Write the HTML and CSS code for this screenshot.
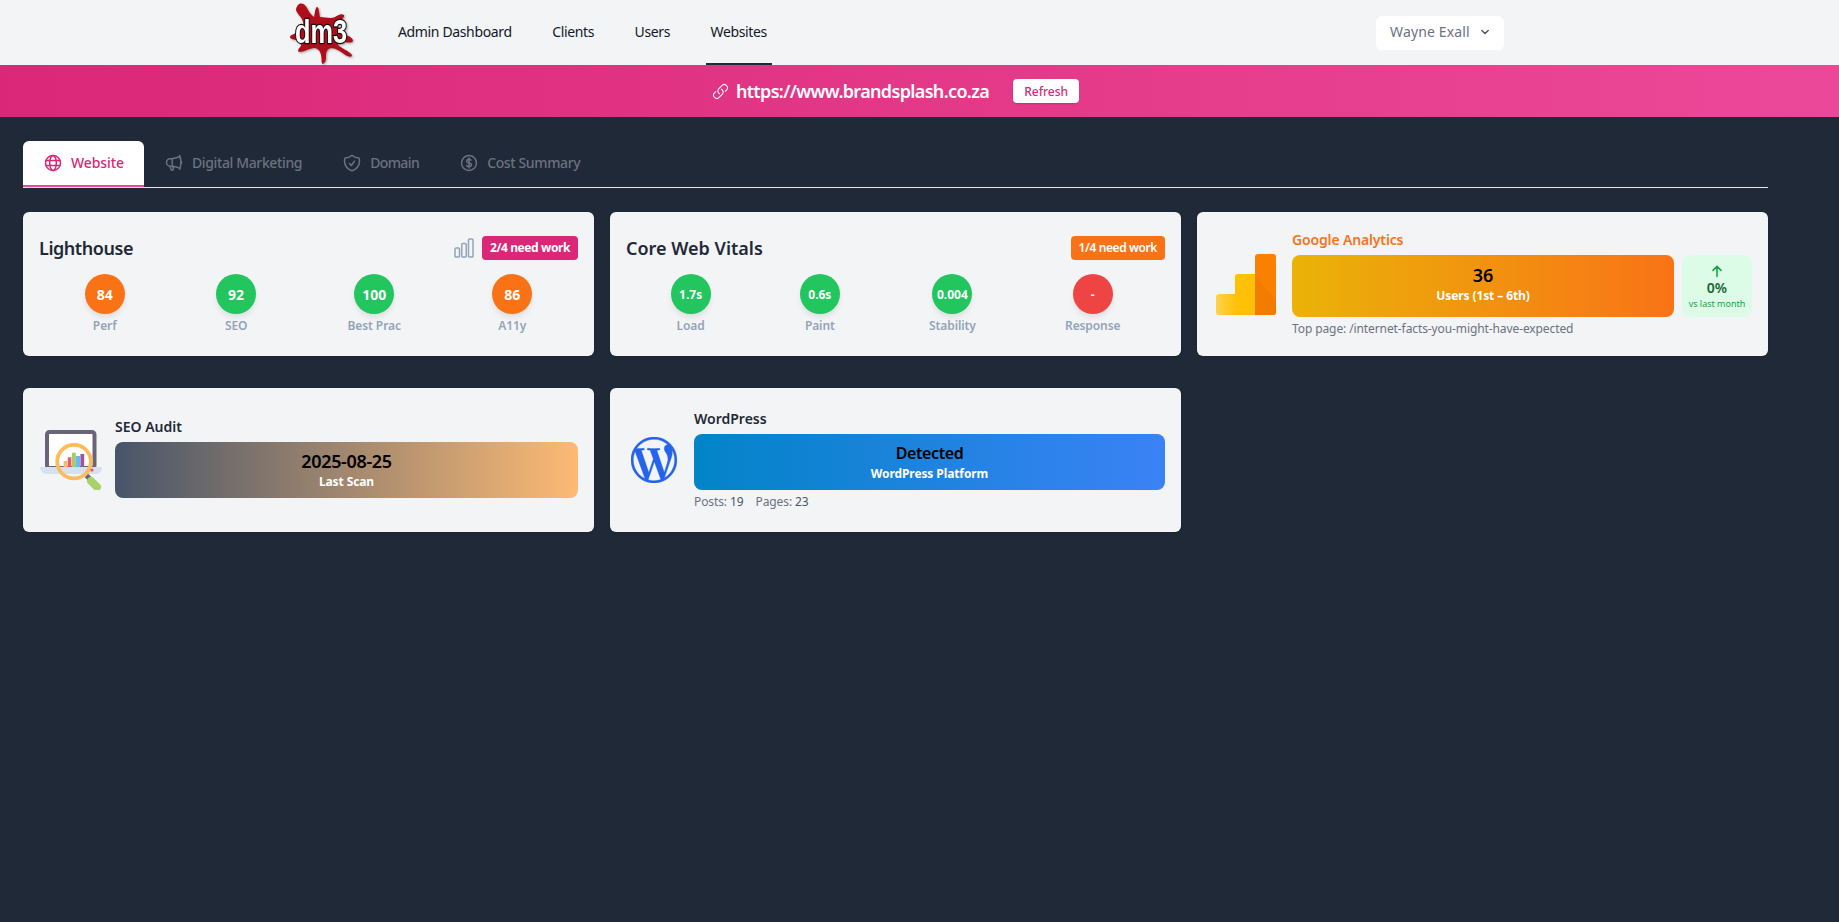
FILE: index.html
```html
<!DOCTYPE html>
<html>
  <head>
    <meta charset="utf-8">
    <title>Websites</title>
    <link rel="stylesheet" href="styles.css">
  </head>
  <body>
    <nav class="topnav">
      <svg class="logo" viewBox="0 0 64 62" width="64" height="62">
        <path class="splat" d="M9 3C12 0 16 2 18 6C20 10 22 13 25 15C26 11 26 6 28 5C30 5 30 11 31 15C36 15 42 17 46 15C49 13 52 11 55 13C56 15 52 18 49 20C47 23 50 27 53 30C56 33 62 34 64 38C64 41 60 41 56 40C52 39 49 40 49 43C52 46 60 49 63 53C63 56 59 55 55 52C51 49 46 46 42 46C38 47 37 50 37 54C37 57 37 60 34 62C32 62 33 57 32 53C31 48 28 46 25 46C21 46 15 50 10 50C8 49 10 46 12 44C13 41 10 39 7 38C4 37 1 37 1 35C2 32 6 32 9 30C13 28 15 24 14 20C13 15 8 12 7 8C7 6 8 4 9 3Z"/>
        <text class="logo-text" x="32" y="41" textLength="52" lengthAdjust="spacingAndGlyphs">dm3</text>
      </svg>
      <a class="navlink" href="#">Admin Dashboard</a>
      <a class="navlink" href="#">Clients</a>
      <a class="navlink" href="#">Users</a>
      <a class="navlink active" href="#">Websites</a>
      <div class="usermenu">
        <span>Wayne Exall</span>
        <svg class="ico-chev" viewBox="0 0 20 20" width="16" height="16"><path d="M6 8l4 4 4-4" fill="none" stroke="currentColor" stroke-width="1.8" stroke-linecap="round" stroke-linejoin="round"/></svg>
      </div>
    </nav>

    <div class="banner">
      <svg class="ico" viewBox="0 0 24 24" width="17" height="17"><path d="M13.19 8.688a4.5 4.5 0 011.242 7.244l-4.5 4.5a4.5 4.5 0 01-6.364-6.364l1.757-1.757m13.35-.622l1.757-1.757a4.5 4.5 0 00-6.364-6.364l-4.5 4.5a4.5 4.5 0 001.242 7.244"/></svg>
      <span class="url">https://www.brandsplash.co.za</span>
      <button class="refresh">Refresh</button>
    </div>

    <main class="content">
      <div class="tabs">
        <div class="tab active">
          <svg class="ico" viewBox="0 0 24 24" width="20" height="20"><circle cx="12" cy="12" r="9"/><ellipse cx="12" cy="12" rx="4" ry="9"/><path d="M3.6 9h16.8M3.6 15h16.8"/></svg>
          Website
        </div>
        <div class="tab">
          <svg class="ico" viewBox="0 0 24 24" width="20" height="20"><path d="M10.34 15.84c-.688-.06-1.386-.09-2.09-.09H7.5a4.5 4.5 0 110-9h.75c.704 0 1.402-.03 2.09-.09m0 9.18c.253.962.584 1.892.985 2.783.247.55.06 1.21-.463 1.511l-.657.38c-.551.318-1.26.117-1.527-.461a20.845 20.845 0 01-1.44-4.282m3.102.069a18.03 18.03 0 01-.59-4.59c0-1.586.205-3.124.59-4.59m0 9.18a23.848 23.848 0 018.835 2.535M10.34 6.66a23.847 23.847 0 008.835-2.535m0 0A23.74 23.74 0 0018.795 3m.38 1.125a23.91 23.91 0 011.014 5.395m-1.014 8.855c-.118.38-.245.754-.38 1.125m.38-1.125a23.91 23.91 0 001.014-5.395m0-3.46c.495.413.811 1.035.811 1.73 0 .695-.316 1.317-.811 1.73m0-3.46a24.347 24.347 0 010 3.46"/></svg>
          Digital Marketing
        </div>
        <div class="tab tab-domain">
          <svg class="ico" viewBox="0 0 24 24" width="20" height="20"><path d="M9 12.75L11.25 15 15 9.75m-3-7.036A11.959 11.959 0 013.598 6 11.99 11.99 0 003 9.749c0 5.592 3.824 10.29 9 11.623 5.176-1.332 9-6.03 9-11.622 0-1.31-.21-2.571-.598-3.751h-.152c-3.196 0-6.1-1.248-8.25-3.286z"/></svg>
          Domain
        </div>
        <div class="tab">
          <svg class="ico" viewBox="0 0 24 24" width="20" height="20"><path d="M12 6v12m-3-2.818l.879.659c1.171.879 3.07.879 4.242 0 1.172-.879 1.172-2.303 0-3.182C13.536 12.219 12.768 12 12 12c-.725 0-1.45-.22-2.003-.659-1.106-.879-1.106-2.303 0-3.182s2.9-.879 4.006 0l.415.33M21 12a9 9 0 11-18 0 9 9 0 0118 0z"/></svg>
          Cost Summary
        </div>
      </div>

      <div class="cards">
        <section class="card score-card">
          <header class="card-head">
            <h2 class="tight">Lighthouse</h2>
            <svg class="ico ico-bars" viewBox="0 0 24 24" width="24" height="24"><path d="M3 13.125C3 12.504 3.504 12 4.125 12h2.25c.621 0 1.125.504 1.125 1.125v6.75C7.5 20.496 6.996 21 6.375 21h-2.25A1.125 1.125 0 013 19.875v-6.75zM9.750 8.625c0-.621.504-1.125 1.125-1.125h2.25c.621 0 1.125.504 1.125 1.125v11.25c0 .621-.504 1.125-1.125 1.125h-2.25a1.125 1.125 0 01-1.125-1.125V8.625zM16.5 4.125c0-.621.504-1.125 1.125-1.125h2.25C20.496 3 21 3.504 21 4.125v15.750c0 .621-.504 1.125-1.125 1.125h-2.25a1.125 1.125 0 01-1.125-1.125V4.125z"/></svg>
            <span class="badge pink">2/4 need work</span>
          </header>
          <div class="scores">
            <div class="score"><div class="dot orange">84</div><span>Perf</span></div>
            <div class="score"><div class="dot green">92</div><span>SEO</span></div>
            <div class="score"><div class="dot green">100</div><span>Best Prac</span></div>
            <div class="score"><div class="dot orange">86</div><span>A11y</span></div>
          </div>
        </section>

        <section class="card score-card">
          <header class="card-head">
            <h2>Core Web Vitals</h2>
            <span class="badge amber">1/4 need work</span>
          </header>
          <div class="scores">
            <div class="score"><div class="dot green small">1.7s</div><span>Load</span></div>
            <div class="score"><div class="dot green small">0.6s</div><span>Paint</span></div>
            <div class="score"><div class="dot green small">0.004</div><span>Stability</span></div>
            <div class="score"><div class="dot red small">-</div><span>Response</span></div>
          </div>
        </section>

        <section class="card media-card ga-card">
          <svg class="ga-logo" viewBox="0 0 60 61" width="60" height="61">
            <defs>
              <linearGradient id="gaLeft" x1="0" y1="0" x2="1" y2="0"><stop offset="0" stop-color="#ffd34d"/><stop offset="1" stop-color="#ffc107"/></linearGradient>
            </defs>
            <path d="M3 40h17v21H3a3 3 0 01-3-3V43a3 3 0 013-3z" fill="url(#gaLeft)"/>
            <path d="M22 20h17v41H19V23a3 3 0 013-3z" fill="#ffc107"/>
            <path d="M42 0h15a3 3 0 013 3v55a3 3 0 01-3 3H39V3a3 3 0 013-3z" fill="#f98000"/>
            <path d="M39 22l21 24v12a3 3 0 01-3 3H39z" fill="#ef7a00" opacity=".8"/>
          </svg>
          <div class="media-body pad-s">
            <h3 class="ga-title">Google Analytics</h3>
            <div class="ga-row">
              <div class="stat grad-amber"><strong>36</strong><span>Users (1st – 6th)</span></div>
              <div class="delta">
                <svg viewBox="0 0 24 24" width="16" height="16"><path d="M12 20V5M6 11l6-6 6 6" fill="none" stroke="#16a34a" stroke-width="2.4" stroke-linecap="round" stroke-linejoin="round"/></svg>
                <b>0%</b>
                <small>vs last month</small>
              </div>
            </div>
            <p class="note">Top page: /internet-facts-you-might-have-expected</p>
          </div>
        </section>

        <section class="card media-card seo-card">
          <svg class="seo-logo" viewBox="0 0 62 60" width="62" height="60">
            <rect x="7" y="2" width="47.500" height="36" rx="2.500" fill="#fff" stroke="#6a6479" stroke-width="4"/>
            <path d="M0 37h62c0 3-2 7-5 7H6c-3 0-6-4-6-7z" fill="#d6e1ef"/>
            <rect x="23.600" y="31" width="3.800" height="6" fill="#fdbb5c"/>
            <rect x="27.800" y="27.300" width="3.600" height="9.700" fill="#e85a6a"/>
            <rect x="32" y="22.700" width="3.800" height="14.300" fill="#a3cf62"/>
            <rect x="35.800" y="26" width="4.200" height="11" fill="#6cb9f0"/>
            <rect x="40.400" y="24" width="3.800" height="13" fill="#a0559a"/>
            <circle cx="34" cy="31.600" r="16.800" fill="none" stroke="#fdbb5c" stroke-width="3.800"/>
            <path d="M46.500 45.500l4 4" stroke="#6a6479" stroke-width="5"/>
            <path d="M51 51l6 6" stroke="#a9d26c" stroke-width="8" stroke-linecap="round"/>
            <circle cx="52" cy="40" r="1.600" fill="#ef5350"/>
          </svg>
          <div class="media-body pad-b">
            <h3>SEO Audit</h3>
            <div class="stat grad-slate tall"><strong class="date">2025-08-25</strong><span>Last Scan</span></div>
          </div>
        </section>

        <section class="card media-card wp-card">
          <svg class="wp-logo" viewBox="0 0 24 24" width="46" height="46"><path d="M21.469 6.825c.84 1.537 1.318 3.3 1.318 5.175 0 3.979-2.156 7.456-5.363 9.325l3.295-9.527c.615-1.54.82-2.771.82-3.864 0-.405-.026-.78-.07-1.11m-7.981.105c.647-.03 1.232-.105 1.232-.105.582-.075.514-.93-.067-.899 0 0-1.755.135-2.88.135-1.064 0-2.85-.15-2.85-.15-.585-.03-.661.855-.075.885 0 0 .54.061 1.125.09l1.68 4.605-2.37 7.08L5.354 6.9c.649-.03 1.234-.1 1.234-.1.585-.075.516-.93-.065-.896 0 0-1.746.138-2.874.138-.2 0-.438-.008-.69-.015C4.911 3.15 8.235 1.215 12 1.215c2.809 0 5.365 1.072 7.286 2.833-.046-.003-.091-.009-.141-.009-1.06 0-1.812.923-1.812 1.914 0 .89.513 1.643 1.06 2.531.411.72.89 1.643.89 2.977 0 .915-.354 1.994-.821 3.479l-1.075 3.585-3.9-11.61.001.014zM12 22.784c-1.059 0-2.081-.153-3.048-.437l3.237-9.406 3.315 9.087c.024.053.05.101.078.149-1.12.393-2.325.609-3.582.609M1.211 12c0-1.564.336-3.05.935-4.39L7.29 21.709C3.694 19.96 1.212 16.271 1.211 12M12 0C5.385 0 0 5.385 0 12s5.385 12 12 12 12-5.385 12-12S18.615 0 12 0"/></svg>
          <div class="media-body pad-s">
            <h3>WordPress</h3>
            <div class="stat grad-blue tall"><strong class="word">Detected</strong><span>WordPress Platform</span></div>
            <p class="note wp-note"><span>Posts: <em>19</em></span><span>Pages: <em>23</em></span></p>
          </div>
        </section>
      </div>
    </main>
  </body>
</html>
```

FILE: styles.css
```css
* { box-sizing: border-box; }
body {
  margin: 0;
  min-height: 922px;
  background-color: #1f2937;
  font-family: "Noto Sans", "Open Sans", sans-serif;
  font-size: 14px;
  overflow: hidden; }
h2, h3, p { margin: 0; }

.ico { fill: none; stroke: currentColor; stroke-width: 1.5; stroke-linecap: round; stroke-linejoin: round; flex: none; }

/* top nav */
.topnav {
  display: flex;
  align-items: center;
  gap: 30.5px;
  height: 65px;
  padding: 0 335px 0 289px;
  background-color: #f3f4f6; }
.logo { margin-right: 9.5px; flex: none; overflow: visible; filter: drop-shadow(1px 1px 1px rgba(0,0,0,.35)); }
.splat { fill: #b00d1a; }
.logo-text {
  font-family: "Liberation Sans Narrow", "Liberation Sans", sans-serif;
  font-weight: 700;
  font-size: 33px;
  text-anchor: middle;
  fill: #fff;
  stroke: #111;
  stroke-width: 2.5;
  paint-order: stroke; }
.navlink {
  display: flex;
  align-items: center;
  height: 65px;
  padding: 0 5px 2px;
  color: #111827;
  font-size: 14px;
  text-decoration: none;
  letter-spacing: -.36px; }
.navlink.active { box-shadow: inset 0 -2px 0 #1f2937; }
.usermenu {
  display: flex;
  align-items: center;
  justify-content: space-between;
  width: 128px;
  height: 34px;
  margin-left: auto;
  padding: 0 11px 2px 14px;
  background-color: #fff;
  border-radius: 6px;
  color: #6b7280;
  letter-spacing: .15px; }
.ico-chev { color: #4b5563; }

/* url banner */
.banner {
  display: flex;
  align-items: center;
  justify-content: center;
  height: 52px;
  padding-right: 48px;
  background: linear-gradient(90deg, #db2777, #ec4899);
  color: #fff; }
.url { margin-left: 7px; font-size: 18px; font-weight: 600; letter-spacing: -.65px; }
.refresh {
  margin-left: 24px;
  width: 66px;
  height: 24px;
  border: 0;
  border-radius: 4px;
  background-color: #fff;
  color: #db2777;
  font: 500 12px "Noto Sans", sans-serif;
  box-shadow: 0 1px 2px rgba(0,0,0,.15); }

/* tabs */
.content { padding: 24px 71px 0 23px; }
.tabs {
  display: flex;
  border-bottom: 1px solid #e5e7eb; }
.tab {
  display: flex;
  align-items: center;
  gap: 8px;
  height: 46px;
  padding: 0 20px 3px;
  color: #6b7280;
  font-weight: 500;
  letter-spacing: -.37px; }
.tab .ico { stroke-width: 1.8; }
.tab-domain { letter-spacing: -.6px; }
.tab.active {
  padding-bottom: 1px;
  background-color: #fff;
  border-radius: 6px 6px 0 0;
  border-bottom: 2px solid #ec4899;
  color: #db2777;
  letter-spacing: -.1px; }

/* cards */
.cards {
  display: grid;
  grid-template-columns: repeat(3, 1fr);
  grid-auto-rows: 144px;
  gap: 32px 16px;
  margin-top: 24px; }
.card {
  background-color: #f3f4f6;
  border-radius: 6px;
  box-shadow: 0 1px 3px rgba(0,0,0,.1); }
.score-card { padding: 24px 16px 0; }
.card-head { display: flex; align-items: center; height: 24px; }
.card-head h2 { margin-right: auto; color: #1f2937; font-size: 18px; font-weight: 600; }
.card-head .tight { letter-spacing: -.45px; }
.ico-bars { margin-right: 6px; color: #94a3b8; }
.badge {
  height: 24px;
  padding: 0 8px;
  border-radius: 4px;
  color: #fff;
  font-size: 12px;
  font-weight: 700;
  line-height: 24px;
  letter-spacing: -.4px; }
.badge.pink { background-color: #db2777; }
.badge.amber { background-color: #f97316; font-weight: 600; }
.scores { display: flex; justify-content: space-around; margin-top: 14px; }
.score { display: flex; flex-direction: column; align-items: center; }
.score span { margin-top: 4px; color: #94a3b8; font-size: 12px; font-weight: 600; line-height: 16px; letter-spacing: -.1px; }
.dot {
  display: flex;
  align-items: center;
  justify-content: center;
  width: 40px;
  height: 40px;
  border-radius: 50%;
  color: #fff;
  font-size: 14px;
  font-weight: 700;
  box-shadow: 0 4px 6px -1px rgba(0,0,0,.1); }
.dot.small { font-size: 12px; }
.orange { background-color: #f97316; }
.green { background-color: #22c55e; }
.red { background-color: #ef4444; }

.media-card { display: flex; align-items: center; padding-right: 16px; }
.media-body { flex: 1; min-width: 0; }
.media-body h3 { color: #1f2937; font-size: 14px; font-weight: 600; line-height: 20px; }
.pad-b { padding-bottom: 5px; }
.pad-s { padding-bottom: 2px; }
.ga-card { padding-left: 19px; gap: 16px; }
.seo-card { padding-left: 17px; gap: 13px; }
.wp-card { padding-left: 21px; gap: 17px; }
.wp-logo { fill: #2563eb; stroke: #2563eb; stroke-width: .2; flex: none; }
.ga-logo, .seo-logo { flex: none; }
.media-body .ga-title { color: #f97316; letter-spacing: -.15px; }
.ga-row { display: flex; gap: 8px; margin-top: 5px; }
.stat {
  display: flex;
  flex: 1;
  flex-direction: column;
  align-items: center;
  justify-content: center;
  height: 62px;
  padding-bottom: 5px;
  border-radius: 8px; }
.stat.tall { height: 56px; margin-top: 5px; padding-bottom: 2px; }
.stat strong { color: #000; font-size: 18px; font-weight: 600; line-height: 26px; }
.stat strong.date { letter-spacing: -.35px; }
.stat strong.word { font-size: 16px; letter-spacing: -.4px; }
.stat span { color: #fff; font-size: 12px; font-weight: 700; line-height: 16px; letter-spacing: -.1px; }
.grad-amber { background: linear-gradient(90deg, #eab308, #f97316); }
.grad-slate { background: linear-gradient(90deg, #475569, #fdba74); }
.grad-blue { background: linear-gradient(90deg, #0284c7, #3b82f6); }
.delta {
  display: flex;
  flex: none;
  flex-direction: column;
  align-items: center;
  justify-content: center;
  width: 70px;
  height: 62px;
  padding-top: 1px;
  border-radius: 8px;
  background-color: #dcfce7; }
.delta b { color: #166534; font-size: 14px; font-weight: 600; line-height: 18px; }
.delta small { margin-top: 1px; color: #16a34a; font-size: 9px; line-height: 12px; white-space: nowrap; }
.note { margin-top: 4px; color: #6b7280; font-size: 12px; line-height: 16px; letter-spacing: -.1px; }
.wp-note { display: flex; gap: 12px; }
.wp-note em { color: #4b5563; font-style: normal; }
```
